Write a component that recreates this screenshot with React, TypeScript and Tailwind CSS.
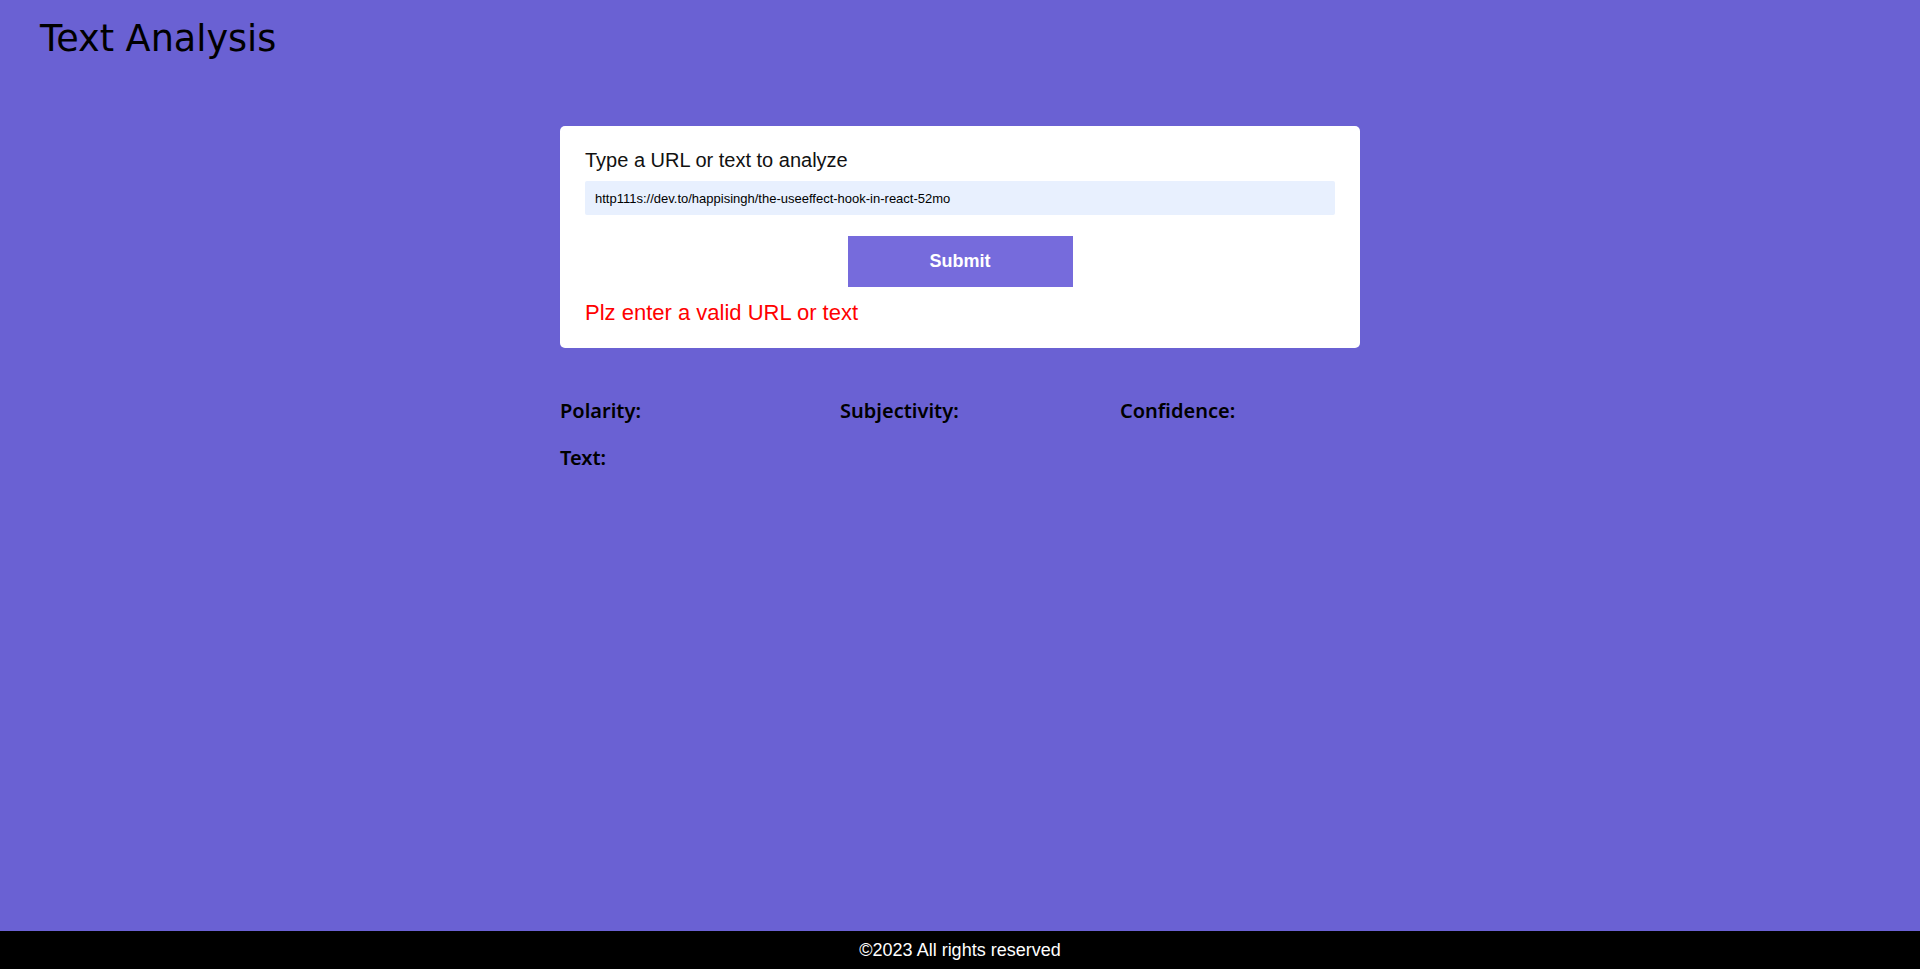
import { useState } from "react";

export default function App() {
  const [value, setValue] = useState("http111s://dev.to/happisingh/the-useeffect-hook-in-react-52mo");
  const [error] = useState("Plz enter a valid URL or text");

  return (
    <div className="h-screen flex flex-col bg-[#6a61d3] overflow-hidden">
      <header className="pl-[40px] pt-[15px] pb-[10px]">
        <h1 className="text-[36.6px] leading-[48px] text-black font-['DejaVu_Sans',sans-serif]">Text Analysis</h1>
      </header>

      <main className="flex-1 flex flex-col items-center pt-[53px]">
        <div className="w-[800px] bg-white rounded-[5px] px-[25px] pt-[23px] pb-[22px] font-['Liberation_Sans',Arial,sans-serif]">
          <label className="block text-[20px] leading-[23px] text-[#111]">Type a URL or text to analyze</label>
          <input
            type="text"
            value={value}
            onChange={(e) => setValue(e.target.value)}
            className="mt-[9px] w-full h-[34px] px-[10px] rounded-[2px] bg-[#e8f0fe] text-[13px] text-black outline-none"
          />
          <div className="flex justify-center mt-[21px]">
            <button className="w-[225px] h-[51px] bg-[#766bdc] text-white text-[18px] font-bold">Submit</button>
          </div>
          <p className="mt-[13px] text-[22px] leading-[26px] text-[#ff0000]">{error}</p>
        </div>

        <div className="w-[800px] mt-[49px] font-['Noto_Sans',sans-serif] font-semibold text-[20px] text-black">
          <div className="grid grid-cols-3 gap-x-[40px]">
            <div className="leading-[28px]">Polarity:</div>
            <div className="leading-[28px]">Subjectivity:</div>
            <div className="leading-[28px]">Confidence:</div>
          </div>
          <div className="mt-[19px] leading-[28px]">Text:</div>
        </div>
      </main>

      <footer className="h-[38px] shrink-0 bg-black flex items-center justify-center text-white text-[18px] font-['Liberation_Sans',Arial,sans-serif]">
        ©2023 All rights reserved
      </footer>
    </div>
  );
}
